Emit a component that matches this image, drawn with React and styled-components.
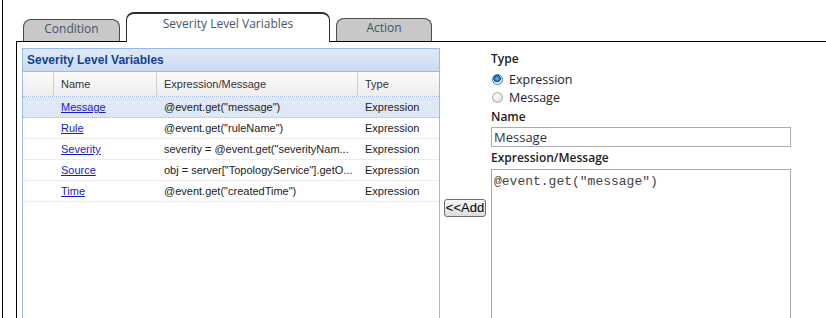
import React, { useState } from "react";
import styled, { createGlobalStyle } from "styled-components";

const GlobalStyle = createGlobalStyle`
  html, body {
    margin: 0;
    padding: 0;
    background: #fff;
  }
`;

const Page = styled.div`
  margin-left: 2px;
  border-left: 1px solid #000;
  height: 318px;
  overflow: hidden;
  padding: 12px 0 0 13px;
  box-sizing: border-box;
`;

const TabStrip = styled.div`
  display: flex;
  align-items: flex-end;
  height: 29px;
  padding-left: 7px;
  gap: 6px;
`;

const Tab = styled.div`
  position: relative;
  z-index: 1;
  box-sizing: border-box;
  width: ${(p) => p.$w}px;
  height: ${(p) => (p.$active ? 30 : p.$h)}px;
  margin-bottom: ${(p) => (p.$active ? -1 : 0)}px;
  padding-top: ${(p) => (p.$active ? 2 : 1)}px;
  background: ${(p) => (p.$active ? "#fff" : "#c8c8c8")};
  border: 1px solid ${(p) => (p.$active ? "#2b2b2b" : "#4a4a4a")};
  border-top-width: ${(p) => (p.$active ? 2 : 1)}px;
  border-bottom: none;
  border-radius: 8px 8px 0 0;
  text-align: center;
  font-family: "Open Sans", "Liberation Sans", sans-serif;
  font-size: 12px;
  line-height: 16px;
  color: #44566b;
`;

const Panel = styled.div`
  display: flex;
  align-items: flex-start;
  border-top: 1px solid #000;
  border-left: 1px solid #000;
  padding: 6px 0 0 5px;
  height: 300px;
`;

const Grid = styled.div`
  width: 416px;
  height: 300px;
  border: 1px solid #99bbe8;
  font-family: "Liberation Sans", Arial, sans-serif;
  font-size: 11px;
  color: #222;
  flex-shrink: 0;
`;

const GridTitle = styled.div`
  height: 22px;
  line-height: 22px;
  padding-left: 4px;
  border-bottom: 1px solid #99bbe8;
  background: linear-gradient(#dfe9f7, #cadcf1);
  font-weight: bold;
  font-size: 12px;
  color: #15428b;
`;

const cols = "31px 103px 201px 1fr";

const HeaderRow = styled.div`
  display: grid;
  grid-template-columns: ${cols};
  height: 24px;
  background: linear-gradient(#fbfbfb, #eeeeee);
  border-bottom: 1px dotted #a3bae9;
`;

const HeaderCell = styled.div`
  line-height: 24px;
  padding-left: 7px;
  border-right: 1px solid #d0d0d0;
  color: #333;
  &:last-child {
    border-right: none;
  }
`;

const Row = styled.div`
  display: grid;
  grid-template-columns: ${cols};
  height: 20px;
  line-height: 20px;
  border-bottom: 1px ${(p) => (p.$selected ? "dotted #a3bae9" : "solid #ededed")};
  background: ${(p) => (p.$selected ? "#dfe8f6" : "#fff")};
`;

const Cell = styled.div`
  padding-left: 7px;
  white-space: nowrap;
  overflow: hidden;
`;

const NameLink = styled.a`
  color: #1a1acc;
  text-decoration: underline;
  cursor: pointer;
`;

const AddColumn = styled.div`
  width: 51px;
  padding: 150px 0 0 4px;
  box-sizing: border-box;
  flex-shrink: 0;
`;

const AddButton = styled.button`
  width: 42px;
  height: 18px;
  padding: 0;
  border: 1px solid #707070;
  border-radius: 3px;
  background: linear-gradient(#f6f6f6, #dddddd);
  font-family: "Liberation Sans", Arial, sans-serif;
  font-size: 13px;
  line-height: 16px;
  color: #000;
`;

const Form = styled.div`
  display: flex;
  flex-direction: column;
  padding-top: 2px;
  font-family: "Open Sans", "Liberation Sans", sans-serif;
  color: #222;
`;

const Label = styled.div`
  height: 18px;
  line-height: 18px;
  font-size: 12px;
  font-weight: 600;
  margin-top: ${(p) => p.$mt || 0}px;
  margin-bottom: ${(p) => p.$mb || 0}px;
`;

const RadioRow = styled.label`
  display: flex;
  align-items: center;
  gap: 6px;
  height: 18px;
  font-size: 12.5px;
  cursor: pointer;
`;

const RadioDot = styled.span`
  width: 9px;
  height: 9px;
  border-radius: 50%;
  border: 1px solid ${(p) => (p.$on ? "#3c7fb1" : "#a9a9a9")};
  background: ${(p) =>
    p.$on
      ? "radial-gradient(circle at 45% 40%, #7fc0ef 0, #1f6fae 2.5px, #17517e 3.5px, #e6eef5 4px)"
      : "radial-gradient(circle at 40% 35%, #ffffff, #d4d4d4)"};
  margin-left: 1px;
`;

const TextInput = styled.input`
  width: 300px;
  height: 20px;
  box-sizing: border-box;
  border: 1px solid #abadb3;
  padding: 0 0 0 2px;
  margin: 1px 0 2px;
  font-family: "Open Sans", "Liberation Sans", sans-serif;
  font-size: 13px;
  color: #333;
  outline: none;
`;

const TextArea = styled.textarea`
  width: 300px;
  height: 170px;
  box-sizing: border-box;
  margin-top: 2px;
  border: 1px solid #a9a9a9;
  padding: 4px 2px;
  resize: none;
  font-family: "Liberation Mono", "Courier New", monospace;
  font-size: 13px;
  line-height: 16px;
  color: #444;
  outline: none;
`;

const rows = [
  { name: "Message", expr: '@event.get("message")' },
  { name: "Rule", expr: '@event.get("ruleName")' },
  { name: "Severity", expr: 'severity = @event.get("severityNam...' },
  { name: "Source", expr: 'obj = server["TopologyService"].getO...' },
  { name: "Time", expr: '@event.get("createdTime")' },
];

const App = () => {
  const [kind, setKind] = useState("expression");
  const [selected, setSelected] = useState(0);

  return (
    <Page>
      <GlobalStyle />
      <TabStrip>
        <Tab $w={97} $h={22}>Condition</Tab>
        <Tab $w={204} $active>Severity Level Variables</Tab>
        <Tab $w={96} $h={23}>Action</Tab>
      </TabStrip>
      <Panel>
        <Grid>
          <GridTitle>Severity Level Variables</GridTitle>
          <HeaderRow>
            <HeaderCell />
            <HeaderCell>Name</HeaderCell>
            <HeaderCell>Expression/Message</HeaderCell>
            <HeaderCell>Type</HeaderCell>
          </HeaderRow>
          {rows.map((r, i) => (
            <Row key={r.name} $selected={i === selected} onClick={() => setSelected(i)}>
              <Cell />
              <Cell>
                <NameLink>{r.name}</NameLink>
              </Cell>
              <Cell>{r.expr}</Cell>
              <Cell>Expression</Cell>
            </Row>
          ))}
        </Grid>
        <AddColumn>
          <AddButton>&lt;&lt;Add</AddButton>
        </AddColumn>
        <Form>
          <Label $mb={2}>Type</Label>
          <RadioRow onClick={() => setKind("expression")}>
            <RadioDot $on={kind === "expression"} />
            Expression
          </RadioRow>
          <RadioRow onClick={() => setKind("message")}>
            <RadioDot $on={kind === "message"} />
            Message
          </RadioRow>
          <Label $mt={2}>Name</Label>
          <TextInput defaultValue="Message" />
          <Label>Expression/Message</Label>
          <TextArea defaultValue={'@event.get("message")'} />
        </Form>
      </Panel>
    </Page>
  );
};

export default App;
